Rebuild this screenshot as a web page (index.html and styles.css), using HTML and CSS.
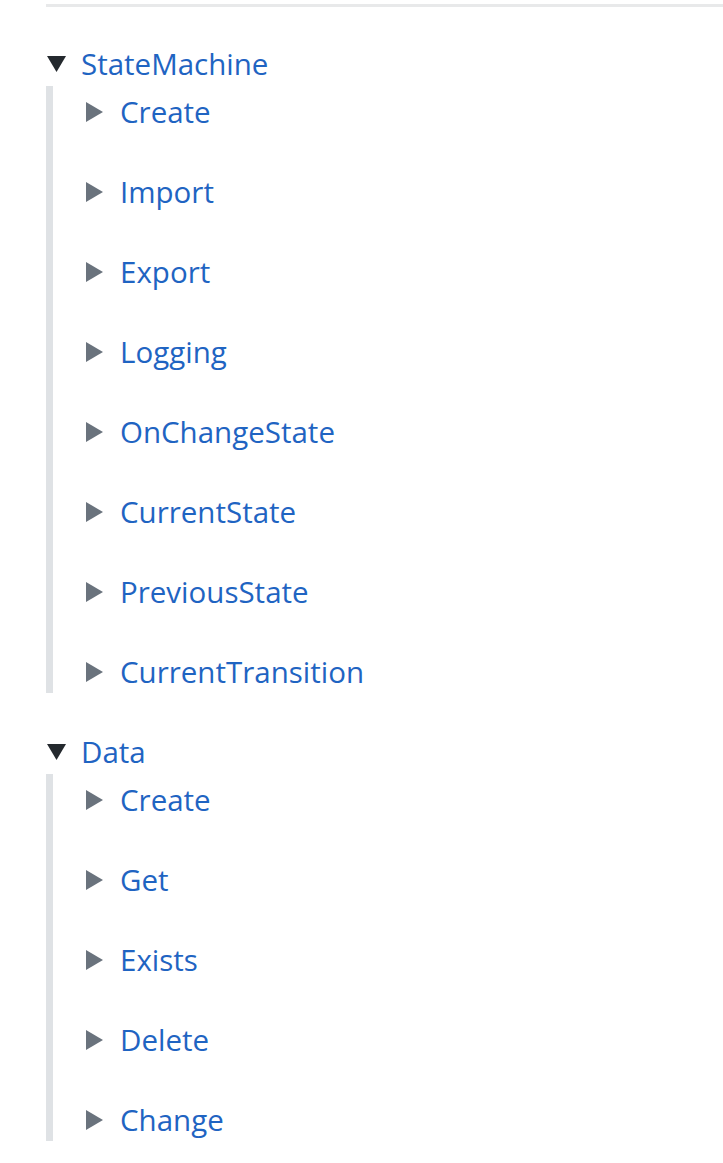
FILE: index.html
```html
<!DOCTYPE html>
<html>
<head>
<meta charset="utf-8">
<link rel="stylesheet" href="styles.css">
</head>
<body>
<div class="page">
  <div class="rule"></div>
  <details class="group" open>
    <summary class="group-title"><svg class="tri-down" viewBox="0 0 19 16"><polygon points="0,0 19,0 9.5,16"/></svg><a href="#">StateMachine</a></summary>
    <div class="children">
      <details class="item"><summary><svg class="tri-right" viewBox="0 0 17 20"><polygon points="0,0 17,10 0,20"/></svg><a href="#">Create</a></summary></details>
      <details class="item"><summary><svg class="tri-right" viewBox="0 0 17 20"><polygon points="0,0 17,10 0,20"/></svg><a href="#">Import</a></summary></details>
      <details class="item"><summary><svg class="tri-right" viewBox="0 0 17 20"><polygon points="0,0 17,10 0,20"/></svg><a href="#">Export</a></summary></details>
      <details class="item"><summary><svg class="tri-right" viewBox="0 0 17 20"><polygon points="0,0 17,10 0,20"/></svg><a href="#">Logging</a></summary></details>
      <details class="item"><summary><svg class="tri-right" viewBox="0 0 17 20"><polygon points="0,0 17,10 0,20"/></svg><a href="#">OnChangeState</a></summary></details>
      <details class="item"><summary><svg class="tri-right" viewBox="0 0 17 20"><polygon points="0,0 17,10 0,20"/></svg><a href="#">CurrentState</a></summary></details>
      <details class="item"><summary><svg class="tri-right" viewBox="0 0 17 20"><polygon points="0,0 17,10 0,20"/></svg><a href="#">PreviousState</a></summary></details>
      <details class="item"><summary><svg class="tri-right" viewBox="0 0 17 20"><polygon points="0,0 17,10 0,20"/></svg><a href="#">CurrentTransition</a></summary></details>
    </div>
  </details>
  <details class="group" open>
    <summary class="group-title"><svg class="tri-down" viewBox="0 0 19 16"><polygon points="0,0 19,0 9.5,16"/></svg><a href="#">Data</a></summary>
    <div class="children">
      <details class="item"><summary><svg class="tri-right" viewBox="0 0 17 20"><polygon points="0,0 17,10 0,20"/></svg><a href="#">Create</a></summary></details>
      <details class="item"><summary><svg class="tri-right" viewBox="0 0 17 20"><polygon points="0,0 17,10 0,20"/></svg><a href="#">Get</a></summary></details>
      <details class="item"><summary><svg class="tri-right" viewBox="0 0 17 20"><polygon points="0,0 17,10 0,20"/></svg><a href="#">Exists</a></summary></details>
      <details class="item"><summary><svg class="tri-right" viewBox="0 0 17 20"><polygon points="0,0 17,10 0,20"/></svg><a href="#">Delete</a></summary></details>
      <details class="item"><summary><svg class="tri-right" viewBox="0 0 17 20"><polygon points="0,0 17,10 0,20"/></svg><a href="#">Change</a></summary></details>
    </div>
  </details>
</div>
</body>
</html>
```
FILE: styles.css
```css
html, body {
  margin: 0;
  padding: 0;
  background: #ffffff;
}
.page {
  padding: 4px 0 0 46px;
  font-family: "Open Sans", "Noto Sans", sans-serif;
  font-size: 29.5px;
  line-height: 42px;
}
.rule {
  height: 3px;
  background: #e8e9ea;
}
.group {
  margin-top: 36px;
}
.group + .group {
  margin-top: 38px;
}
summary {
  list-style: none;
  display: flex;
  align-items: center;
  height: 42px;
  cursor: pointer;
}
summary::-webkit-details-marker {
  display: none;
}
a {
  color: #1f64c2;
  text-decoration: none;
}
.tri-down {
  width: 19px;
  height: 16px;
  margin-left: 1px;
  margin-right: 15px;
  fill: #24292e;
}
.children {
  margin-top: 1px;
  border-left: 7px solid #dfe2e5;
  padding: 5px 0 0 33px;
  display: flex;
  flex-direction: column;
  gap: 38px;
}
.tri-right {
  width: 17px;
  height: 20px;
  margin-right: 17px;
  fill: #6a737d;
}
```
